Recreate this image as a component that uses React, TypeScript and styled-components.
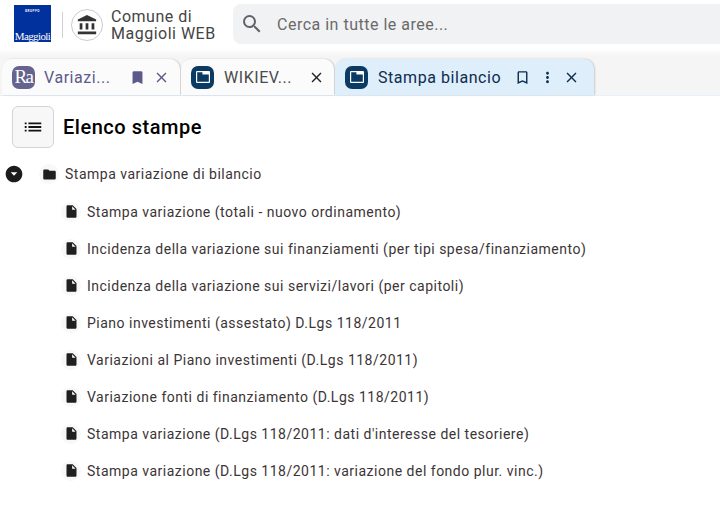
import React from "react";
import styled, { createGlobalStyle } from "styled-components";
import {
  MdAccountBalance,
  MdArrowDropDownCircle,
  MdBookmark,
  MdBookmarkBorder,
  MdClose,
  MdFolder,
  MdList,
  MdInsertDriveFile,
  MdMoreVert,
  MdSearch,
} from "react-icons/md";

const reports = [
  "Stampa variazione (totali - nuovo ordinamento)",
  "Incidenza della variazione sui finanziamenti (per tipi spesa/finanziamento)",
  "Incidenza della variazione sui servizi/lavori (per capitoli)",
  "Piano investimenti (assestato) D.Lgs 118/2011",
  "Variazioni al Piano investimenti (D.Lgs 118/2011)",
  "Variazione fonti di finanziamento (D.Lgs 118/2011)",
  "Stampa variazione (D.Lgs 118/2011: dati d'interesse del tesoriere)",
  "Stampa variazione (D.Lgs 118/2011: variazione del fondo plur. vinc.)",
];

const FolderBadge = () => (
  <AppBadge>
    <svg width="16" height="14" viewBox="0 0 16 14">
      <rect x="1" y="1" width="14" height="12" rx="1" fill="#fff" />
      <path d="M2.2 2.2h5.2v2.2h6.4v7.4H2.2z" fill="#0b3a63" />
    </svg>
  </AppBadge>
);

export default function App() {
  return (
    <Page>
      <GlobalStyle />
      <TopBar>
        <Logo>
          <LogoTop>GRUPPO</LogoTop>
          <LogoName>Maggioli</LogoName>
        </Logo>
        <Divider />
        <EntityIcon>
          <MdAccountBalance size={22} color="#333" />
        </EntityIcon>
        <EntityName>
          Comune di
          <br />
          Maggioli WEB
        </EntityName>
        <SearchBox>
          <MdSearch size={24} color="#5f6368" />
          <SearchText>Cerca in tutte le aree...</SearchText>
        </SearchBox>
      </TopBar>

      <TabStrip>
        <Tab $width={178} $tone="#5c5a8c" $pad={6}>
          <RaBadge>Ra</RaBadge>
          <TabLabel>Variazi...</TabLabel>
          <TabAction>
            <MdBookmark size={17} />
          </TabAction>
          <TabAction>
            <MdClose size={17} />
          </TabAction>
        </Tab>
        <Tab $width={153} $tone="#4a4a4a" $pad={5}>
          <FolderBadge />
          <TabLabel>WIKIEV...</TabLabel>
          <TabAction $dark>
            <MdClose size={17} />
          </TabAction>
        </Tab>
        <Tab $width={259} $tone="#0d2c4f" $pad={10} $active>
          <FolderBadge />
          <TabLabel>Stampa bilancio</TabLabel>
          <TabAction>
            <MdBookmarkBorder size={17} />
          </TabAction>
          <TabAction>
            <MdMoreVert size={17} />
          </TabAction>
          <TabAction>
            <MdClose size={17} />
          </TabAction>
        </Tab>
      </TabStrip>

      <TitleRow>
        <ListButton>
          <MdList size={22} color="#111" />
        </ListButton>
        <Title>Elenco stampe</Title>
      </TitleRow>

      <Tree>
        <FolderRow>
          <Caret>
            <MdArrowDropDownCircle size={20} color="#1c1c1c" />
          </Caret>
          <GlyphDot>
            <MdFolder size={15} color="#1f1f1f" />
          </GlyphDot>
          <RowText>Stampa variazione di bilancio</RowText>
        </FolderRow>
        {reports.map((r) => (
          <ReportRow key={r}>
            <GlyphDot>
              <MdInsertDriveFile size={15} color="#1f1f1f" />
            </GlyphDot>
            <RowText>{r}</RowText>
          </ReportRow>
        ))}
      </Tree>
    </Page>
  );
}

const GlobalStyle = createGlobalStyle`
  html, body {
    margin: 0;
    background: #fff;
  }
  body {
    font-family: Roboto, "Liberation Sans", sans-serif;
  }
`;

const Page = styled.div`
  width: 720px;
  height: 514px;
  overflow: hidden;
  background: #fff;
`;

const TopBar = styled.header`
  height: 50px;
  display: flex;
  align-items: center;
  padding-left: 14px;
  box-sizing: border-box;
`;

const Logo = styled.div`
  width: 37px;
  height: 37px;
  margin-top: -3px;
  background: #00319c;
  color: #fff;
  display: flex;
  flex-direction: column;
  align-items: center;
  justify-content: space-between;
  overflow: hidden;
`;

const LogoTop = styled.span`
  font-size: 3px;
  font-weight: 700;
  margin-top: 4px;
  letter-spacing: 0.5px;
`;

const LogoName = styled.span`
  font-family: "Liberation Serif", serif;
  font-size: 11px;
  line-height: 12px;
  letter-spacing: -0.6px;
`;

const Divider = styled.div`
  width: 1px;
  height: 26px;
  margin: 0 8px 0 11px;
  background: #d0d0d0;
`;

const EntityIcon = styled.div`
  width: 30px;
  height: 30px;
  border: 1px solid #ccc;
  border-radius: 50%;
  display: flex;
  align-items: center;
  justify-content: center;
`;

const EntityName = styled.div`
  width: 122px;
  margin-left: 8px;
  font-size: 16px;
  line-height: 17px;
  color: #444;
  letter-spacing: 0.5px;
`;

const SearchBox = styled.div`
  flex: 1;
  height: 40px;
  margin-top: -2px;
  padding-left: 7px;
  background: #f1f2f4;
  border-radius: 8px 0 0 8px;
  display: flex;
  align-items: center;
  gap: 13px;
`;

const SearchText = styled.span`
  font-size: 16px;
  color: #6a6a6a;
  letter-spacing: 0.5px;
`;

const TabStrip = styled.nav`
  height: 46px;
  padding: 9px 0 0 2px;
  box-sizing: border-box;
  display: flex;
  gap: 1px;
  background: linear-gradient(#fdfdfd, #f5f5f5 6px);
  border-bottom: 1px solid #e6f1fb;
`;

const Tab = styled.div<{ $width: number; $tone: string; $pad: number; $active?: boolean }>`
  width: ${(p) => p.$width}px;
  box-sizing: border-box;
  padding: 0 ${(p) => p.$pad}px 0 10px;
  display: flex;
  align-items: center;
  color: ${(p) => p.$tone};
  background: ${(p) => (p.$active ? "#deeefb" : "#fbfbfb")};
  border-radius: 10px 10px 0 0;
  box-shadow: 1px 0 2px rgba(0, 0, 0, 0.18);
`;

const TabAction = styled.span<{ $dark?: boolean }>`
  width: 24.5px;
  display: flex;
  justify-content: center;
  color: ${(p) => (p.$dark ? "#222" : "inherit")};
`;

const AppBadge = styled.div`
  width: 23px;
  height: 23px;
  margin-right: 10px;
  border-radius: 7px;
  background: #0b3a63;
  display: flex;
  align-items: center;
  justify-content: center;
  flex: none;
`;

const RaBadge = styled(AppBadge)`
  margin-right: 9px;
  background: #66648f;
  color: #fff;
  font-family: "Liberation Serif", serif;
  font-size: 19px;
  letter-spacing: -1.5px;
`;

const TabLabel = styled.span`
  flex: 1;
  font-size: 16px;
  letter-spacing: 0.55px;
  white-space: nowrap;
`;

const TitleRow = styled.div`
  display: flex;
  align-items: center;
  gap: 9px;
  padding: 10px 0 0 12px;
`;

const ListButton = styled.button`
  width: 42px;
  height: 42px;
  padding: 0;
  background: #f7f7f7;
  border: 1px solid #d4d4d4;
  border-radius: 6px;
  display: flex;
  align-items: center;
  justify-content: center;
`;

const Title = styled.h1`
  margin: 0;
  font-size: 20px;
  font-weight: 500;
  color: #000;
  letter-spacing: 0.52px;
`;

const Tree = styled.div`
  margin-top: 7px;
  display: flex;
  flex-direction: column;
`;

const FolderRow = styled.div`
  height: 38px;
  display: flex;
  align-items: center;
  padding-left: 4px;
`;

const ReportRow = styled.div`
  height: 37px;
  display: flex;
  align-items: center;
  padding-left: 61px;
`;

const Caret = styled.span`
  width: 20px;
  height: 20px;
  margin-right: 15px;
`;

const GlyphDot = styled.span`
  width: 20px;
  height: 20px;
  border-radius: 50%;
  background: #f8f8f8;
  display: flex;
  align-items: center;
  justify-content: center;
  margin-right: 6px;
`;

const RowText = styled.span`
  font-size: 14px;
  color: #3c3436;
  letter-spacing: 0.5px;
`;
